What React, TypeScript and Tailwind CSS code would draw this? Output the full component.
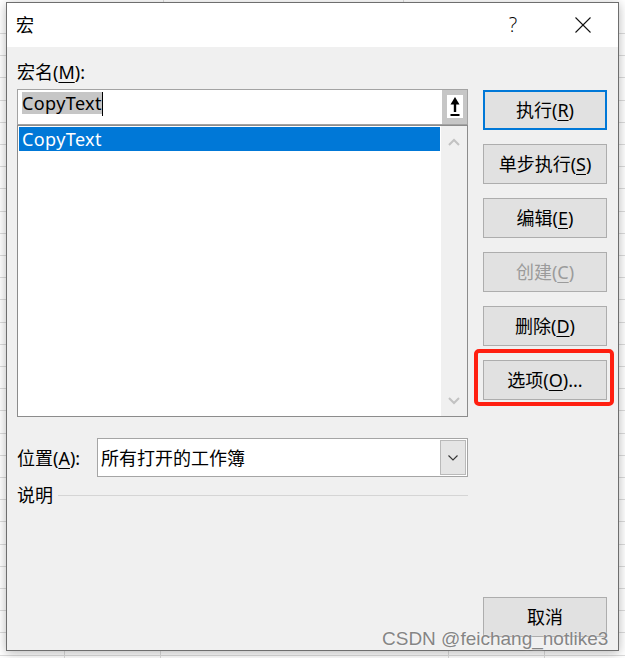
import React from "react";

const U = ({ children }: { children: React.ReactNode }) => (
  <span className="underline underline-offset-[3px] decoration-1">{children}</span>
);

function Btn({
  children,
  primary,
  disabled,
}: {
  children: React.ReactNode;
  primary?: boolean;
  disabled?: boolean;
}) {
  return (
    <div
      className={
        "h-[40px] w-full flex items-center justify-center bg-[#e1e1e1] text-[18px] leading-[24px] " +
        (primary ? "border-2 border-[#0078d7] " : "border border-[#adadad] ") +
        (disabled ? "text-[#9b9b9b]" : "text-black")
      }
    >
      {children}
    </div>
  );
}

export default function App() {
  const hLines: number[] = [];
  for (let y = 33; y < 658; y += 22.2) hLines.push(Math.round(y) + 0.5);
  return (
    <div className="relative w-[625px] h-[658px] overflow-hidden bg-white pt-[2px] pl-[6px] [font-family:'Noto_Sans','Noto_Sans_CJK_SC',sans-serif]">
      <svg className="absolute inset-0" width={625} height={658}>
        {hLines.map((y) => (
          <line key={y} x1={0} x2={625} y1={y} y2={y} stroke="#dcdcdc" strokeWidth={1} />
        ))}
        <line x1={163.5} x2={163.5} y1={0} y2={4} stroke="#dcdcdc" />
        <line x1={403.5} x2={403.5} y1={0} y2={4} stroke="#dcdcdc" />
        {[64, 160, 448, 544].map((x) => (
          <line key={x} x1={x + 0.5} x2={x + 0.5} y1={640} y2={658} stroke="#dcdcdc" />
        ))}
      </svg>

      <div className="relative w-[613px] h-[649px] border border-[#6e6e6e] flex flex-col shadow-[0_2px_10px_rgba(0,0,0,0.28)]">
        {/* title bar */}
        <div className="h-[44px] bg-white flex items-center pl-[9px] pr-[12px]">
          <span className="text-[18px] leading-[24px] text-black">宏</span>
          <div className="ml-auto flex items-center gap-[24px]">
            <div className="w-[46px] flex justify-center text-[20px] leading-[24px] font-light text-black [font-family:'Open_Sans',sans-serif]">
              ?
            </div>
            <div className="w-[46px] flex justify-center">
              <svg width={16} height={16} viewBox="0 0 16 16">
                <line x1={0.5} y1={0.5} x2={15.5} y2={15.5} stroke="#111" strokeWidth={1.1} />
                <line x1={15.5} y1={0.5} x2={0.5} y2={15.5} stroke="#111" strokeWidth={1.1} />
              </svg>
            </div>
          </div>
        </div>

        {/* body */}
        <div className="flex-1 bg-[#f0f0f0] flex pl-[10px] pr-[11px] gap-[15px]">
          {/* left column */}
          <div className="w-[451px] flex flex-col pt-[13px]">
            <div className="h-[24px] text-[18px] leading-[24px] text-black">
              宏名(<U>M</U>):
            </div>
            <div className="mt-[5px] h-[36px] border border-[#a3a3a3] bg-white flex">
              <div className="flex-1 flex items-start pl-[4px] pt-[2px]">
                <span className="bg-[#c6c6c6] text-black text-[18px] leading-[22px] tracking-[0.4px]">CopyText</span>
                <div className="w-px h-[24px] bg-black" />
              </div>
              <div className="w-[25px] bg-[#c6c6c6] pl-[5px] pr-[4px] pt-[5px] pb-[6px]">
                <div className="w-[16px] h-[23px] bg-white">
                  <svg width={16} height={23} viewBox="0 0 16 23">
                    <polygon points="8,2 3.5,9.5 12.5,9.5" fill="#000" />
                    <rect x={6.8} y={9} width={2.4} height={8} fill="#000" />
                    <rect x={3.5} y={19} width={9} height={2} fill="#000" />
                  </svg>
                </div>
              </div>
            </div>
            <div className="h-[292px] border border-[#8c8c8c] bg-white flex">
              <div className="flex-1 p-[1px]">
                <div className="h-[24px] bg-[#0078d7] text-white text-[18px] leading-[24px] pl-[3px] tracking-[0.4px]">
                  CopyText
                </div>
              </div>
              <div className="w-[26px] bg-[#f0f0f0] flex flex-col items-center justify-between pt-[12px] pb-[11px]">
                <svg width={12} height={8} viewBox="0 0 12 8">
                  <polyline points="1,7 6,2 11,7" fill="none" stroke="#c2c2c2" strokeWidth={2} />
                </svg>
                <svg width={12} height={8} viewBox="0 0 12 8">
                  <polyline points="1,1 6,6 11,1" fill="none" stroke="#c2c2c2" strokeWidth={2} />
                </svg>
              </div>
            </div>
            <div className="mt-[21px] h-[39px] flex items-center">
              <div className="w-[80px] text-[18px] leading-[24px] text-black">
                位置(<U>A</U>):
              </div>
              <div className="w-[371px] h-[39px] border border-[#a5a5a5] bg-white flex items-center pl-[3px]">
                <span className="flex-1 text-[18px] leading-[24px] text-black">所有打开的工作簿</span>
                <div className="w-[26px] h-[35px] mr-[1px] bg-[#e5e5e5] border border-[#b9b9b9] flex items-center justify-center">
                  <svg width={10} height={6} viewBox="0 0 10 6">
                    <polyline points="0.5,0.5 5,5 9.5,0.5" fill="none" stroke="#333" strokeWidth={1.1} />
                  </svg>
                </div>
              </div>
            </div>
            <div className="mt-[6px] h-[24px] flex items-center">
              <span className="text-[18px] leading-[24px] text-black">说明</span>
              <div className="ml-[5px] flex-1 h-px bg-[#d5d5d5]" />
            </div>
          </div>

          {/* right column */}
          <div className="w-[124px] flex flex-col gap-[14px] pt-[43px] pb-[13px]">
            <Btn primary>
              执行(<U>R</U>)
            </Btn>
            <Btn>
              单步执行(<U>S</U>)
            </Btn>
            <Btn>
              编辑(<U>E</U>)
            </Btn>
            <Btn disabled>
              创建(<U>C</U>)
            </Btn>
            <Btn>
              删除(<U>D</U>)
            </Btn>
            <div className="relative">
              <Btn>
                选项(<U>O</U>)...
              </Btn>
              <div className="absolute left-[-9px] right-[-7px] top-[-11px] bottom-[-6px] border-4 border-[#ff1f10] rounded-[5px]" />
            </div>
            <div className="mt-auto">
              <Btn>取消</Btn>
            </div>
          </div>
        </div>
      </div>

      <div className="absolute left-[382px] top-[629px] text-[19px] leading-[19px] text-[#858585] whitespace-nowrap [font-family:'Liberation_Sans',sans-serif] [text-shadow:0_0_2px_rgba(255,255,255,0.9)]">
        CSDN @feichang_notlike3
      </div>
    </div>
  );
}
